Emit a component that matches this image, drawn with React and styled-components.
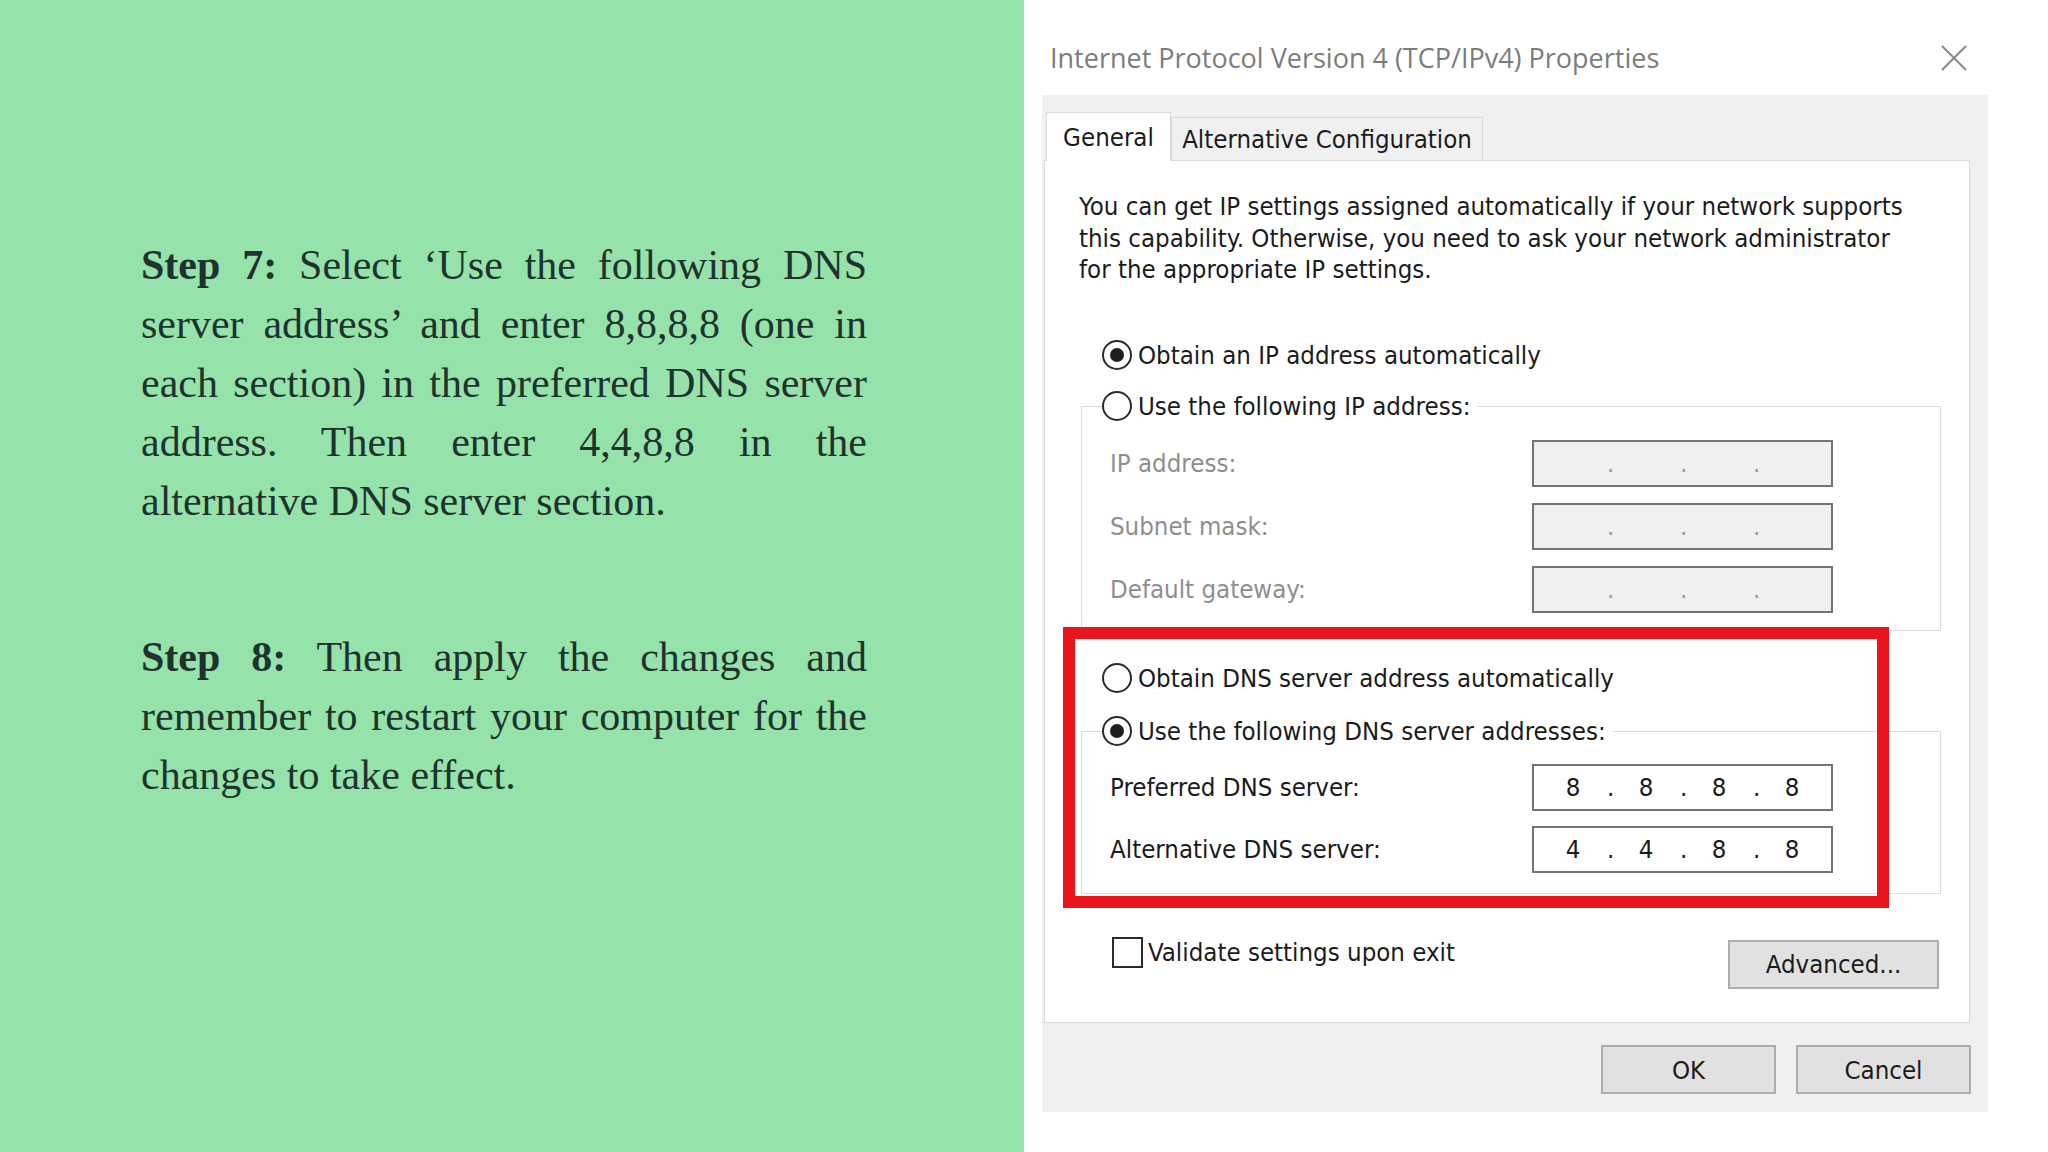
import React from "react";
import styled, { createGlobalStyle } from "styled-components";

const ui = `"DejaVu Sans Condensed", "DejaVu Sans", sans-serif`;

const GlobalStyle = createGlobalStyle`
  html, body {
    margin: 0;
    padding: 0;
  }
  body {
    width: 2048px;
    height: 1152px;
    overflow: hidden;
    background: #fff;
  }
`;

const Page = styled.div`
  display: flex;
  width: 2048px;
  height: 1152px;
`;

const StepsPane = styled.section`
  flex: none;
  width: 1024px;
  box-sizing: border-box;
  padding: 236px 0 0 141px;
  background: #95e3aa;
`;

const Step = styled.p`
  width: 726px;
  margin: 0 0 ${p => p.$gap || 0}px;
  font-family: "Liberation Serif", "Times New Roman", serif;
  font-size: 42px;
  line-height: 59px;
  text-align: justify;
  color: #1e332e;
`;

const Lead = styled.strong`
  font-weight: bold;
`;

const ShotPane = styled.section`
  flex: 1;
  background: #fff;
  padding-left: 18px;
`;

const Dialog = styled.div`
  width: 946px;
  font-family: ${ui};
  font-stretch: semi-condensed;
  font-size: 25.6px;
  color: #1b1b1b;
`;

const TitleBar = styled.div`
  height: 95px;
  box-sizing: border-box;
  padding: 20px 21px 0 8px;
  display: flex;
  align-items: center;
  justify-content: space-between;
`;

const Title = styled.div`
  font-family: "Open Sans", "Noto Sans", sans-serif;
  font-stretch: normal;
  font-size: 27px;
  color: #7c7c7c;
`;

const Body = styled.div`
  height: 1017px;
  box-sizing: border-box;
  padding: 17px 17px 18px 2px;
  background: #f0f0f0;
`;

const TabRow = styled.div`
  position: relative;
  z-index: 1;
  display: flex;
  align-items: flex-end;
  margin: 0 0 -1px 2px;
`;

const Tab = styled.div`
  width: ${p => p.$w}px;
  height: ${p => (p.$active ? 49 : 44)}px;
  box-sizing: border-box;
  display: flex;
  align-items: center;
  justify-content: center;
  border: 1px solid #d9d9d9;
  border-bottom: ${p => (p.$active ? "none" : "1px solid #d9d9d9")};
  background: ${p => (p.$active ? "#fff" : "#f0f0f0")};
  white-space: nowrap;
`;

const Panel = styled.div`
  position: relative;
  height: 863px;
  margin-right: 1px;
  box-sizing: border-box;
  padding: 30px 28px 0 34px;
  background: #fff;
  border: 1px solid #d9d9d9;
`;

const Intro = styled.p`
  margin: 0;
  line-height: 31.5px;
`;

const RadioRow = styled.label`
  display: flex;
  align-items: center;
  gap: 6px;
  height: 32px;
  margin: ${p => p.$top || 0}px 0 0 ${p => (p.$inset ? 0 : 23)}px;
  white-space: nowrap;
`;

const RadioDot = styled.span`
  flex: none;
  width: 30px;
  height: 30px;
  box-sizing: border-box;
  border: 2px solid #2b2b2b;
  border-radius: 50%;
  display: flex;
  align-items: center;
  justify-content: center;
  &::after {
    content: "";
    width: 14px;
    height: 14px;
    border-radius: 50%;
    background: #1f1f1f;
    display: ${p => (p.$on ? "block" : "none")};
  }
`;

const GroupBox = styled.div`
  margin: ${p => p.$top}px 0 0 2px;
  padding: 0 0 ${p => p.$bottom}px 28px;
  border: 1px solid #dcdcdc;
`;

const GroupHeader = styled.div`
  width: fit-content;
  margin: -17px 0 0 -8px;
  padding-right: 7px;
  background: #fff;
`;

const FieldGrid = styled.div`
  display: grid;
  grid-template-columns: 422px 301px;
  row-gap: ${p => p.$gap}px;
  padding-top: ${p => p.$top}px;
  align-items: center;
`;

const FieldLabel = styled.span`
  color: ${p => (p.$disabled ? "#8e8e8e" : "#1b1b1b")};
  white-space: nowrap;
`;

const IpBox = styled.div`
  height: 47px;
  box-sizing: border-box;
  display: flex;
  align-items: center;
  padding-left: 7px;
  border: 2px solid #747474;
  background: ${p => (p.$disabled ? "#f0f0f0" : "#fff")};
  color: ${p => (p.$disabled ? "#9a9a9a" : "#1b1b1b")};
`;

const Octet = styled.span`
  width: 64px;
  text-align: center;
`;

const Sep = styled.span`
  width: 9px;
  box-sizing: border-box;
  padding-left: 2px;
  text-align: center;
`;

const Highlight = styled.div`
  position: absolute;
  left: 18px;
  top: 466px;
  width: 826px;
  height: 281px;
  box-sizing: border-box;
  border: 12px solid #e8151d;
  pointer-events: none;
`;

const OptionsRow = styled.div`
  display: flex;
  justify-content: space-between;
  align-items: flex-start;
  margin-top: 43px;
  padding: 0 2px 0 33px;
`;

const CheckRow = styled.label`
  display: flex;
  align-items: center;
  gap: 5px;
  white-space: nowrap;
`;

const CheckBox = styled.span`
  width: 31px;
  height: 31px;
  box-sizing: border-box;
  border: 2px solid #2b2b2b;
  background: #fff;
`;

const Button = styled.button`
  width: ${p => p.$w}px;
  height: 49px;
  margin-top: ${p => p.$top || 0}px;
  box-sizing: border-box;
  padding: 0;
  border: 2px solid #adadad;
  background: #e1e1e1;
  font: inherit;
  color: #1b1b1b;
`;

const Footer = styled.div`
  display: flex;
  justify-content: flex-end;
  gap: 20px;
  margin-top: 22px;
`;

function CloseIcon() {
  return (
    <svg width="26" height="26" viewBox="0 0 26 26">
      <path d="M1 1 L25 25 M25 1 L1 25" stroke="#8a8a8a" strokeWidth="2" fill="none" />
    </svg>
  );
}

function IpField({ value, disabled }) {
  const parts = value || ["", "", "", ""];
  return (
    <IpBox $disabled={disabled}>
      {parts.map((n, i) => (
        <React.Fragment key={i}>
          <Octet>{n}</Octet>
          {i < 3 && <Sep>.</Sep>}
        </React.Fragment>
      ))}
    </IpBox>
  );
}

export default function App() {
  return (
    <Page>
      <GlobalStyle />
      <StepsPane>
        <Step $gap={97}>
          <Lead>Step 7:</Lead> Select ‘Use the following DNS server address’ and enter 8,8,8,8
          (one in each section) in the preferred DNS server address. Then enter 4,4,8,8 in
          the alternative DNS server section.
        </Step>
        <Step>
          <Lead>Step 8:</Lead> Then apply the changes and remember to restart your computer for
          the changes to take effect.
        </Step>
      </StepsPane>

      <ShotPane>
        <Dialog>
          <TitleBar>
            <Title>Internet Protocol Version 4 (TCP/IPv4) Properties</Title>
            <CloseIcon />
          </TitleBar>
          <Body>
            <TabRow>
              <Tab $active $w={125}>General</Tab>
              <Tab $w={312}>Alternative Configuration</Tab>
            </TabRow>
            <Panel>
              <Intro>
                You can get IP settings assigned automatically if your network supports
                <br />
                this capability. Otherwise, you need to ask your network administrator
                <br />
                for the appropriate IP settings.
              </Intro>

              <RadioRow $top={53}>
                <RadioDot $on />
                Obtain an IP address automatically
              </RadioRow>
              <GroupBox $top={35} $bottom={17}>
                <GroupHeader>
                  <RadioRow $inset>
                    <RadioDot />
                    Use the following IP address:
                  </RadioRow>
                </GroupHeader>
                <FieldGrid $top={18} $gap={16}>
                  <FieldLabel $disabled>IP address:</FieldLabel>
                  <IpField disabled />
                  <FieldLabel $disabled>Subnet mask:</FieldLabel>
                  <IpField disabled />
                  <FieldLabel $disabled>Default gateway:</FieldLabel>
                  <IpField disabled />
                </FieldGrid>
              </GroupBox>

              <RadioRow $top={31}>
                <RadioDot />
                Obtain DNS server address automatically
              </RadioRow>
              <GroupBox $top={37} $bottom={20}>
                <GroupHeader>
                  <RadioRow $inset>
                    <RadioDot $on />
                    Use the following DNS server addresses:
                  </RadioRow>
                </GroupHeader>
                <FieldGrid $top={17} $gap={15}>
                  <FieldLabel>Preferred DNS server:</FieldLabel>
                  <IpField value={["8", "8", "8", "8"]} />
                  <FieldLabel>Alternative DNS server:</FieldLabel>
                  <IpField value={["4", "4", "8", "8"]} />
                </FieldGrid>
              </GroupBox>

              <OptionsRow>
                <CheckRow>
                  <CheckBox />
                  Validate settings upon exit
                </CheckRow>
                <Button $w={211} $top={3}>Advanced...</Button>
              </OptionsRow>

              <Highlight />
            </Panel>
            <Footer>
              <Button $w={175}>OK</Button>
              <Button $w={175}>Cancel</Button>
            </Footer>
          </Body>
        </Dialog>
      </ShotPane>
    </Page>
  );
}
